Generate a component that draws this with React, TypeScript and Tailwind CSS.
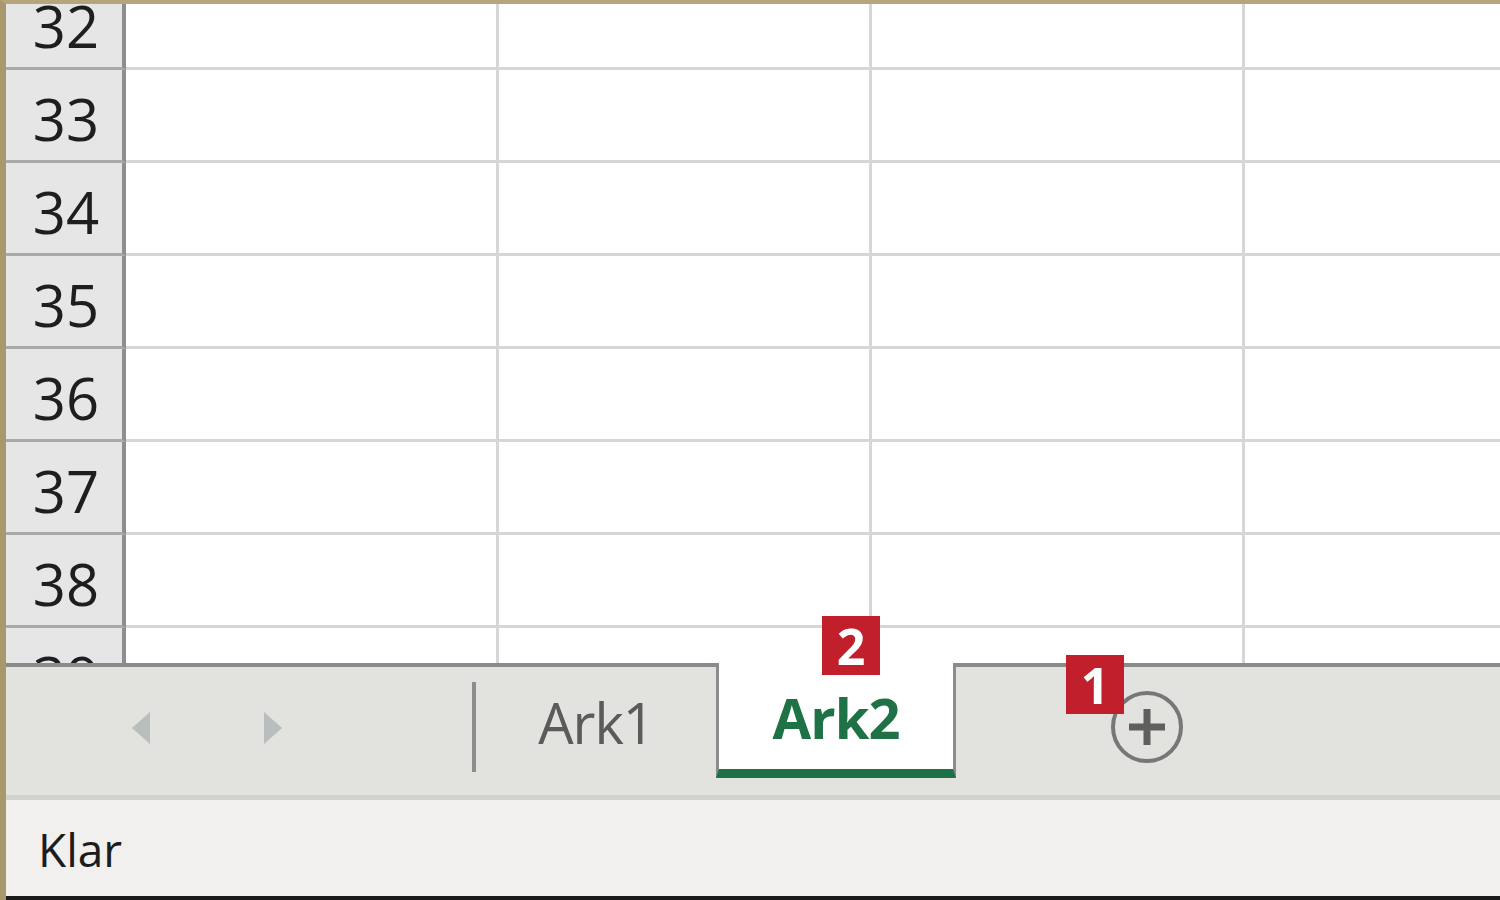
import { ReactNode } from "react";

const rows = [32, 33, 34, 35, 36, 37, 38, 39];
const cols = [0, 1, 2, 3];

function Badge({ n, className }: { n: string; className: string }) {
  return (
    <div
      className={`absolute flex h-[59px] w-[58px] items-center justify-center bg-[#c01f2b] text-[50px] font-bold leading-none text-white ${className}`}
    >
      {n}
    </div>
  );
}

function Tab({ children, active }: { children: ReactNode; active?: boolean }) {
  if (active) {
    return (
      <div className="relative -mt-[4px] flex h-[115px] w-[240px] items-center justify-center border-x-[3px] border-b-[9px] border-x-[#8c8c8c] border-b-[#1e7145] bg-white pt-[2px]">
        <span className="text-[56px] font-bold tracking-[-1px] text-[#1f7246]">{children}</span>
      </div>
    );
  }
  return (
    <div className="flex h-[115px] w-[240px] items-center justify-center pb-[6px]">
      <span className="text-[56px] tracking-[-1px] text-[#5b5b5b]">{children}</span>
    </div>
  );
}

export default function App() {
  return (
    <div
      className="relative flex h-[900px] w-[1500px] flex-col overflow-hidden border-l-[6px] border-t-[4px] border-l-[#a8996c] border-t-[#b7a57b] bg-white"
      style={{ fontFamily: '"Open Sans", "Noto Sans", sans-serif' }}
    >
      {/* grid */}
      <div className="h-[659px] overflow-hidden">
        <div className="-mt-[27px] flex flex-col">
          {rows.map((r) => (
            <div key={r} className="flex h-[93px] shrink-0">
              <div className="flex w-[120px] shrink-0 items-center justify-center border-b-[3px] border-r-[4px] border-b-[#a9a9a9] border-r-[#8e8e8e] bg-[#e6e6e6] pl-[4px] pt-[8px] text-[58px] font-medium leading-none text-[#1e1e1e]">
                {r}
              </div>
              {cols.map((c) => (
                <div
                  key={c}
                  className="w-[373px] shrink-0 border-b-[3px] border-r-[3px] border-[#d6d6d6]"
                />
              ))}
            </div>
          ))}
        </div>
      </div>

      {/* sheet tabs */}
      <div className="flex h-[137px] items-stretch border-b-[5px] border-t-[4px] border-b-[#d2d2ce] border-t-[#8a8a8a] bg-[#e2e2df]">
        <div className="flex w-[466px] items-center pb-[6px]">
          <svg className="ml-[122px]" width="24" height="40" viewBox="0 0 24 40">
            <path d="M22 4 L4 20 L22 36 Z" fill="#b9bdbd" />
          </svg>
          <svg className="ml-[110px]" width="24" height="40" viewBox="0 0 24 40">
            <path d="M2 4 L20 20 L2 36 Z" fill="#b9bdbd" />
          </svg>
        </div>
        <div className="flex items-center pb-[8px]">
          <div className="h-[90px] w-[4px] bg-[#8d8d8d]" />
        </div>
        <Tab>Ark1</Tab>
        <Tab active>Ark2</Tab>
        <div className="flex items-center pb-[8px] pl-[152px]">
          <svg width="78" height="78" viewBox="0 0 78 78">
            <circle cx="39" cy="39" r="34" fill="none" stroke="#777" strokeWidth="4" />
            <path d="M39 21 V57 M21 39 H57" stroke="#5f5f5f" strokeWidth="7" />
          </svg>
        </div>
      </div>

      {/* status bar */}
      <div className="flex flex-1 items-center border-b-[4px] border-b-[#1b1b1b] bg-[#f1f0ef] pl-[32px] pt-[2px]">
        <span className="text-[46px] font-medium text-[#1c1c1c]">Klar</span>
      </div>

      <Badge n="2" className="left-[816px] top-[612px]" />
      <Badge n="1" className="left-[1060px] top-[651px]" />
    </div>
  );
}
